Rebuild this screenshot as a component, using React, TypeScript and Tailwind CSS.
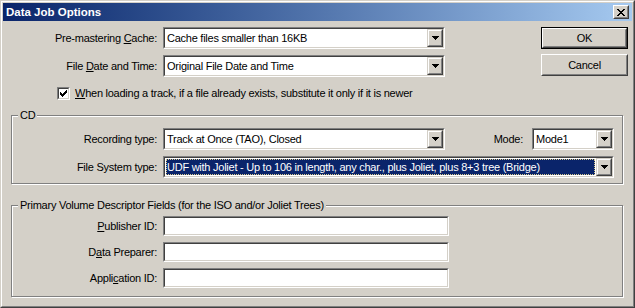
import React from "react";

// classic win2k bevel colours
const raisedOuter = "border border-t-[#d4d0c8] border-l-[#d4d0c8] border-r-[#404040] border-b-[#404040]";
const raisedInner = "border border-t-white border-l-white border-r-[#808080] border-b-[#808080]";

function Pixels({ rows, w, h }: { rows: string[]; w: number; h: number }) {
  return (
    <svg width={w} height={h} viewBox={`0 0 ${w} ${h}`} shapeRendering="crispEdges">
      {rows.flatMap((r, y) =>
        r.split("").map((c, x) => (c === "#" ? <rect key={`${x}-${y}`} x={x} y={y} width={1} height={1} fill="#000" /> : null))
      )}
    </svg>
  );
}

const arrow = ["#######", ".#####.", "..###..", "...#..."];
const cross = ["##....##", ".##..##.", "..####..", "...##...", "..####..", ".##..##.", "##....##"];
const tick = ["......#", ".....##", "#...###", "##.###.", "#####..", ".###...", "..#...."];

function DropButton() {
  return (
    <div className={`w-[16px] h-full ${raisedOuter}`}>
      <div className={`h-full flex items-center justify-center bg-[#d4d0c8] ${raisedInner}`}>
        <Pixels rows={arrow} w={7} h={4} />
      </div>
    </div>
  );
}

function Sunken({ className, children }: { className: string; children?: React.ReactNode }) {
  return (
    <div className={`flex border border-t-[#808080] border-l-[#808080] border-r-white border-b-white ${className}`}>
      <div className="flex flex-1 min-w-0 bg-white border border-t-[#404040] border-l-[#404040] border-r-[#d4d0c8] border-b-[#d4d0c8]">
        {children}
      </div>
    </div>
  );
}

function Combo({ value, className, selected }: { value: string; className: string; selected?: boolean }) {
  return (
    <Sunken className={`h-[22px] ${className}`}>
      <div className="flex-1 min-w-0 flex">
        {selected ? (
          <div className="flex-1 m-[1px] flex items-center bg-[#0a246a] text-white border border-dotted border-[#d8c98c] whitespace-nowrap overflow-hidden">
            {value}
          </div>
        ) : (
          <div className="flex-1 flex items-center pl-[2px] whitespace-nowrap overflow-hidden">{value}</div>
        )}
      </div>
      <DropButton />
    </Sunken>
  );
}

function Label({ children, className }: { children: React.ReactNode; className: string }) {
  return <div className={`text-right shrink-0 ${className}`}>{children}</div>;
}

function Button({ children, isDefault }: { children: React.ReactNode; isDefault?: boolean }) {
  const face = (
    <div className="h-full flex items-center justify-center border border-t-[#d4d0c8] border-l-[#d4d0c8] border-r-[#808080] border-b-[#808080]">
      {children}
    </div>
  );
  if (isDefault) {
    return (
      <div className="w-[87px] h-[22px] border border-black">
        <div className="h-full border border-t-white border-l-white border-r-[#404040] border-b-[#404040]">{face}</div>
      </div>
    );
  }
  return (
    <div className="w-[87px] h-[22px] border border-t-white border-l-white border-r-[#404040] border-b-[#404040]">{face}</div>
  );
}

export default function App() {
  return (
    <div className="w-[635px] h-[308px] bg-[#d4d0c8] border border-t-[#d4d0c8] border-l-[#d4d0c8] border-r-[#404040] border-b-[#404040] font-['Liberation_Sans',Arial,sans-serif] text-[11px] leading-[13px] tracking-[-0.25px] text-black">
      <div className="h-full flex flex-col p-[1px] border border-t-white border-l-white border-r-[#808080] border-b-[#808080]">
        {/* title bar */}
        <div className="h-[18px] shrink-0 flex items-center pl-[3px] pr-[3px] bg-gradient-to-r from-[#0a246a] to-[#a6caf0]">
          <span className="text-white font-bold text-[11.5px] tracking-normal">Data Job Options</span>
          <div className="ml-auto w-[16px] h-[14px] border border-t-white border-l-white border-r-[#404040] border-b-[#404040]">
            <div className="h-full flex items-center justify-center bg-[#d4d0c8] border border-t-[#d4d0c8] border-l-[#d4d0c8] border-r-[#808080] border-b-[#808080]">
              <Pixels rows={cross} w={8} h={7} />
            </div>
          </div>
        </div>

        {/* body */}
        <div className="flex-1 flex flex-col">
          <div className="flex pt-[6px] pr-[4px]">
            <div className="flex flex-col">
              <div className="flex items-center gap-[6px]">
                <Label className="w-[154px]">
                  Pre-mastering <u>C</u>ache:
                </Label>
                <Combo value="Cache files smaller than 16KB" className="w-[282px]" />
              </div>
              <div className="flex items-center gap-[6px] mt-[6px]">
                <Label className="w-[154px]">
                  File <u>D</u>ate and Time:
                </Label>
                <Combo value="Original File Date and Time" className="w-[282px]" />
              </div>
              <div className="flex items-center gap-[5px] ml-[54px] mt-[10px]">
                <Sunken className="w-[13px] h-[13px]">
                  <div className="flex-1 flex items-center justify-center">
                    <Pixels rows={tick} w={7} h={7} />
                  </div>
                </Sunken>
                <span>
                  <u>W</u>hen loading a track, if a file already exists, substitute it only if it is newer
                </span>
              </div>
            </div>
            <div className="ml-auto flex flex-col gap-[5px]">
              <Button isDefault>OK</Button>
              <Button>Cancel</Button>
            </div>
          </div>

          <fieldset className="ml-[8px] mt-[9px] w-[612px] border border-[#808080] shadow-[inset_1px_1px_0_#fff,1px_1px_0_#fff] pt-[6px] pb-[5px] pr-[8px]">
            <legend className="ml-[6px] px-[2px] leading-[13px] bg-[#d4d0c8]">CD</legend>
            <div className="flex items-center gap-[6px]">
              <Label className="w-[145px]">Recording type:</Label>
              <Combo value="Track at Once (TAO), Closed" className="w-[282px]" />
              <span className="ml-auto">Mode:</span>
              <Combo value="Mode1" className="w-[82px] ml-[3px]" />
            </div>
            <div className="flex items-center gap-[6px] mt-[6px]">
              <Label className="w-[145px]">File System type:</Label>
              <Combo
                selected
                value="UDF with Joliet - Up to 106 in length, any char., plus Joliet, plus 8+3 tree (Bridge)"
                className="flex-1"
              />
            </div>
          </fieldset>

          <fieldset className="ml-[8px] mt-[15px] w-[612px] border border-[#808080] shadow-[inset_1px_1px_0_#fff,1px_1px_0_#fff] pt-[4px] pb-[8px]">
            <legend className="ml-[6px] px-[2px] leading-[13px] bg-[#d4d0c8]">
              Primary Volume Descriptor Fields (for the ISO and/or Joliet Trees)
            </legend>
            <div className="flex flex-col gap-[6px]">
              <div className="flex items-center gap-[6px]">
                <Label className="w-[145px]">
                  <u>P</u>ublisher ID:
                </Label>
                <Sunken className="w-[286px] h-[20px]" />
              </div>
              <div className="flex items-center gap-[6px]">
                <Label className="w-[145px]">
                  D<u>a</u>ta Preparer:
                </Label>
                <Sunken className="w-[286px] h-[20px]" />
              </div>
              <div className="flex items-center gap-[6px]">
                <Label className="w-[145px]">
                  Appli<u>c</u>ation ID:
                </Label>
                <Sunken className="w-[286px] h-[20px]" />
              </div>
            </div>
          </fieldset>
        </div>
      </div>
    </div>
  );
}
